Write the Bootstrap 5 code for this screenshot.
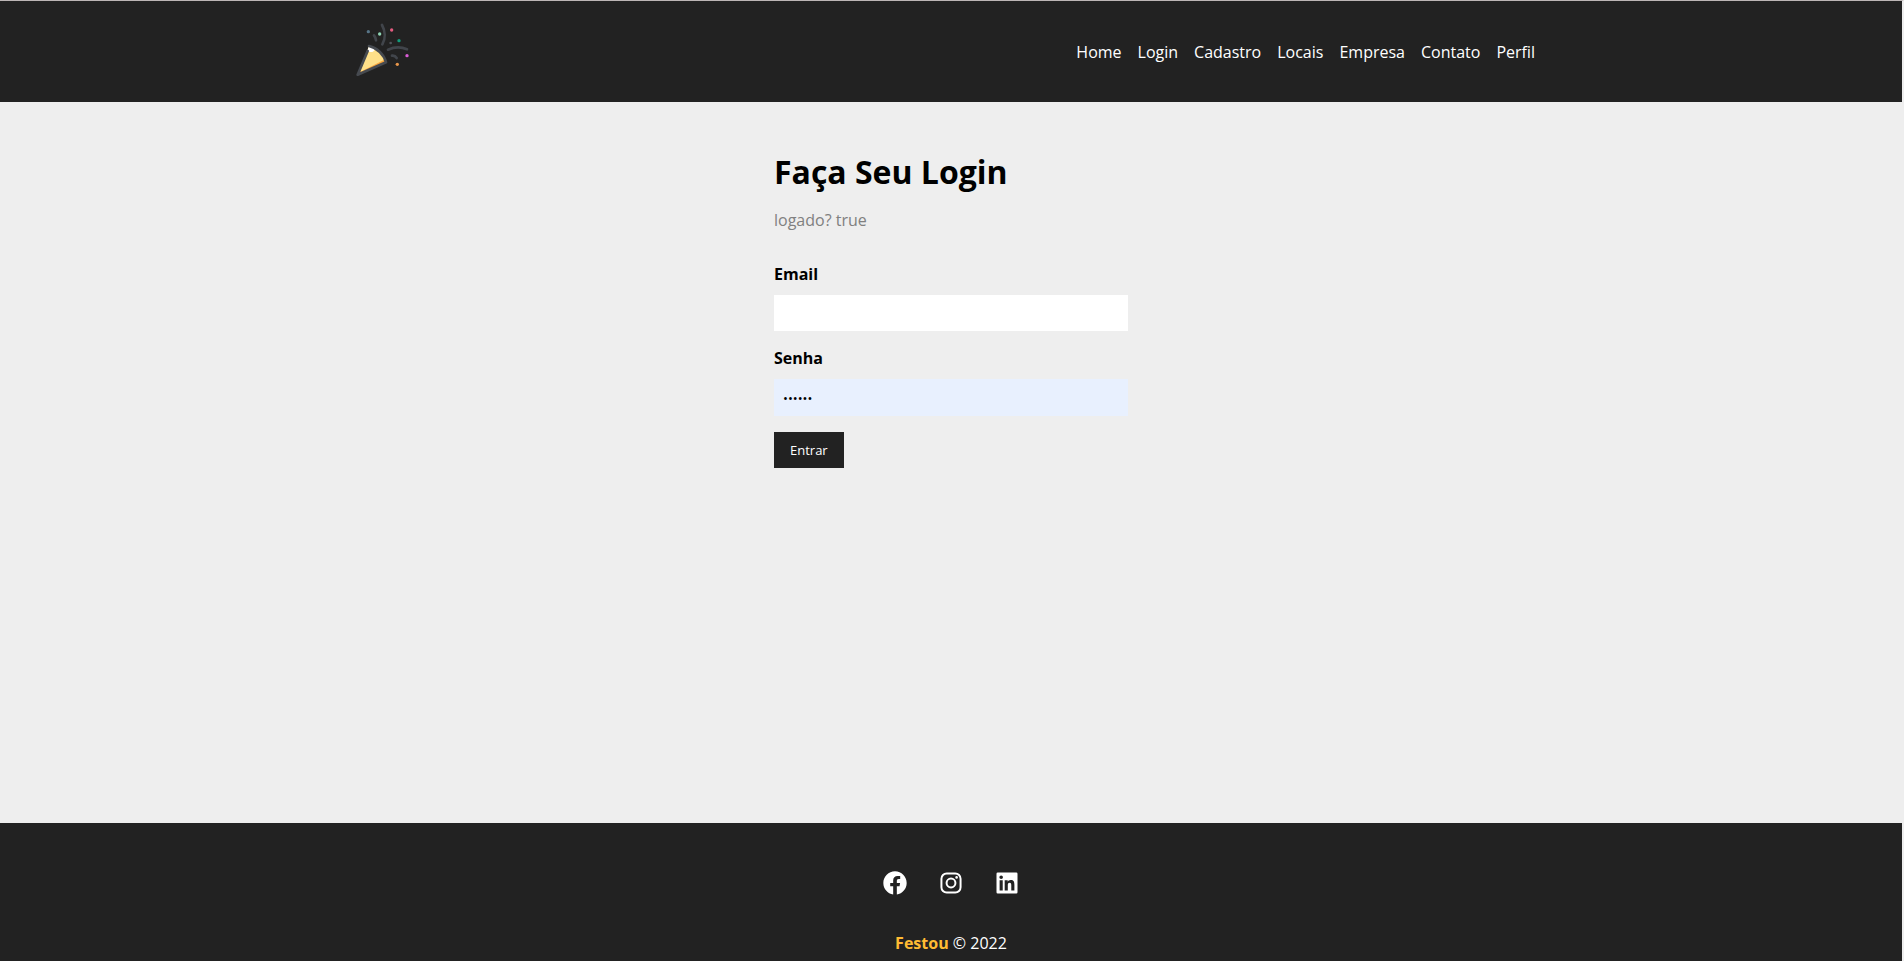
<!DOCTYPE html>
<html lang="pt-BR">
<head>
<meta charset="utf-8">
<meta name="viewport" content="width=device-width, initial-scale=1">
<title>Festou - Login</title>
<link href="https://cdn.jsdelivr.net/npm/bootstrap@5.3.0/dist/css/bootstrap.min.css" rel="stylesheet">
<style>
  body {
    font-family: "Open Sans", "Noto Sans", sans-serif;
    font-size: 16px;
    line-height: 22px;
    color: #000;
    background: #eee;
    border-top: 1px solid #bdb6b6;
    border-right: 2px solid #eee;
  }
  .site-header, .site-footer { background: #222; color: #fff; }
  .site-wrap { max-width: 1200px; }
  .site-header .navbar { min-height: 101px; }
  .site-header .navbar-nav .nav-link { color: #fff; padding: 0; }
  .login-box { width: 354px; max-width: 100%; }
  .login-title { font-size: 32px; line-height: 44px; font-weight: 700; margin-bottom: 15px; }
  .login-status { color: #808080; margin-bottom: 32px; }
  .login-box .form-label { font-weight: 700; margin-bottom: 10px; }
  .login-box .form-control {
    height: 36px;
    padding: 8px 9px;
    border: 0;
    border-radius: 0;
    background: #fff;
    color: #000;
    font-size: 13px;
    line-height: 20px;
  }
  .login-box .form-control.filled { height: 37px; background: #e8f0fe; }
  .btn-enter, .btn-enter:hover {
    height: 36px;
    padding: 8px 16px;
    border: 0;
    border-radius: 0;
    background: #222;
    color: #fff;
    font-size: 13px;
    line-height: 20px;
  }
  .site-footer { padding: 46px 16px 7px; }
  .socials { gap: 28px; margin-bottom: 35px; }
  .socials a { color: #fff; }
  .brand-name { color: #ffbb33; font-weight: 700; }
</style>
</head>
<body class="d-flex flex-column min-vh-100">
<header class="site-header">
  <div class="site-wrap container-fluid px-0">
    <nav class="navbar navbar-expand p-0" aria-label="Principal">
      <a class="navbar-brand p-0 m-0" href="#" aria-label="Festou">
        <svg class="d-block" width="64" height="64" viewBox="33 29 192 192" fill="none" aria-hidden="true">
          <path d="M87 107 C112 113 132 132 138 156 L53 193 Z" fill="#fee089"/>
          <path d="M133 143 L138 157 L62 190 L58 184 Z" fill="#f9a53c"/>
          <path d="M126 137 L133 148 L62 184 L82 122 Z" fill="#fee089"/>
          <path d="M87 107 C96 109 101 113 104 118 C101 124 95 127 88 124 L81 126 Z" fill="#fff"/>
          <path d="M87 107 C112 113 132 132 138 156 L53 193 L83 122" stroke="#464a50" stroke-width="8" stroke-linejoin="round" stroke-linecap="round"/>
          <path d="M126 44 C136 62 137 85 127 102 M102 75 C106 80 108 85 108 90 M144 118 C162 110 183 109 201 117 M156 136 C162 135 167 138 170 143" stroke="#41454b" stroke-width="8" stroke-linecap="round"/>
          <circle cx="85" cy="64" r="5" fill="#577486"/>
          <circle cx="119" cy="71" r="5" fill="#8fd5b5"/>
          <circle cx="155" cy="59" r="5" fill="#e45c80"/>
          <circle cx="177" cy="91" r="5" fill="#119b7b"/>
          <circle cx="152" cy="98" r="4" fill="#50545a"/>
          <circle cx="201" cy="136" r="5" fill="#d95cd5"/>
          <circle cx="172" cy="162" r="5" fill="#e8964a"/>
        </svg>
      </a>
      <ul class="navbar-nav ms-auto gap-3 pe-3">
        <li class="nav-item"><a class="nav-link" href="#">Home</a></li>
        <li class="nav-item"><a class="nav-link" href="#">Login</a></li>
        <li class="nav-item"><a class="nav-link" href="#">Cadastro</a></li>
        <li class="nav-item"><a class="nav-link" href="#">Locais</a></li>
        <li class="nav-item"><a class="nav-link" href="#">Empresa</a></li>
        <li class="nav-item"><a class="nav-link" href="#">Contato</a></li>
        <li class="nav-item"><a class="nav-link" href="#">Perfil</a></li>
      </ul>
    </nav>
  </div>
</header>

<main class="flex-grow-1 py-5">
  <form class="login-box mx-auto">
    <h1 class="login-title">Faça Seu Login</h1>
    <p class="login-status">logado? true</p>
    <div class="mb-3">
      <label class="form-label d-block" for="email">Email</label>
      <input class="form-control" type="email" id="email">
    </div>
    <div class="mb-3">
      <label class="form-label d-block" for="senha">Senha</label>
      <input class="form-control filled" type="password" id="senha" value="123456">
    </div>
    <button class="btn btn-enter" type="button">Entrar</button>
  </form>
</main>

<footer class="site-footer text-center">
  <div class="socials d-flex justify-content-center">
    <a href="#" aria-label="Facebook"><svg class="d-block" width="28" height="28" viewBox="0 0 24 24" fill="currentColor" aria-hidden="true"><path d="M22 12c0-5.520-4.480-10-10-10S2 6.480 2 12c0 4.990 3.660 9.120 8.440 9.880v-6.990H7.900V12h2.540V9.800c0-2.510 1.490-3.890 3.780-3.890 1.090 0 2.240.19 2.240.19v2.460h-1.260c-1.240 0-1.630.77-1.630 1.560V12h2.780l-.45 2.890h-2.330v6.990C18.340 21.120 22 16.990 22 12z"/></svg></a>
    <a href="#" aria-label="Instagram"><svg class="d-block" width="28" height="28" viewBox="0 0 24 24" fill="none" stroke="currentColor" aria-hidden="true"><rect x="3.800" y="3.800" width="16.400" height="16.400" rx="4.500" stroke-width="1.700"/><circle cx="12" cy="12" r="3.800" stroke-width="1.700"/><circle cx="16.800" cy="7.200" r="1.100" fill="currentColor" stroke="none"/></svg></a>
    <a href="#" aria-label="LinkedIn"><svg class="d-block" width="28" height="28" viewBox="0 0 24 24" fill="currentColor" aria-hidden="true"><path d="M20 3H4a1 1 0 0 0-1 1v16a1 1 0 0 0 1 1h16a1 1 0 0 0 1-1V4a1 1 0 0 0-1-1zM8.339 18.337H5.667v-8.590h2.672v8.590zM7.003 8.574a1.548 1.548 0 1 1 0-3.096 1.548 1.548 0 0 1 0 3.096zm11.335 9.763h-2.669V14.160c0-.996-.018-2.277-1.388-2.277-1.390 0-1.601 1.086-1.601 2.207v4.248h-2.667v-8.590h2.560v1.174h.037c.355-.675 1.227-1.387 2.524-1.387 2.704 0 3.203 1.778 3.203 4.092v4.710z"/></svg></a>
  </div>
  <p class="mb-0"><span class="brand-name">Festou</span> © 2022</p>
</footer>
<script src="https://cdn.jsdelivr.net/npm/bootstrap@5.3.0/dist/js/bootstrap.bundle.min.js"></script>
</body>
</html>
